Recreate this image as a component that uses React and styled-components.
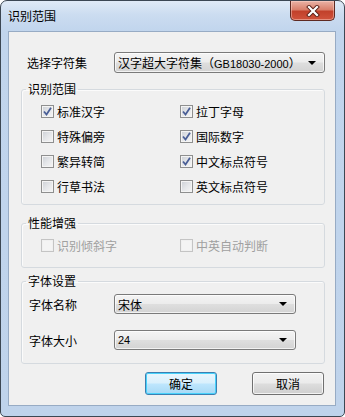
import styled, { createGlobalStyle } from "styled-components";

const GlobalStyle = createGlobalStyle`
  html, body {
    margin: 0;
    padding: 0;
    background: #ffffff;
  }
  body {
    font-family: "Noto Sans CJK SC", "Noto Sans", sans-serif;
    font-size: 12px;
    color: #000;
  }
`;

const Window = styled.div`
  /* Aero basic frame */
  width: 345px;
  height: 417px;
  box-sizing: border-box;
  border: 1px solid #3c4753;
  border-radius: 7px 7px 5px 5px;
  background: linear-gradient(180deg, #e0eaf6 0px, #cbdcf0 14px, #c1d5ed 30px, #bfd3eb 100%);
  padding: 0 8px 10px 7px;
  display: flex;
  flex-direction: column;
  overflow: hidden;
`;

const TitleBar = styled.div`
  height: 30px;
  display: flex;
  align-items: flex-start;
  justify-content: space-between;
  flex-shrink: 0;

  & > span {
    line-height: 30px;
    font-size: 12px;
    color: #000;
  }
`;

const CloseButton = styled.div`
  width: 45px;
  height: 20px;
  margin-right: 1px;
  box-sizing: border-box;
  border: 1px solid #5e2a22;
  border-top: none;
  border-radius: 0 0 5px 5px;
  background: linear-gradient(180deg, #eab3a6 0%, #d9806c 45%, #c2412b 55%, #d0533c 100%);
  box-shadow: inset 0 0 0 1px rgba(255, 220, 210, 0.45);
  display: flex;
  align-items: center;
  justify-content: center;
`;

const Client = styled.div`
  flex: 1;
  box-sizing: border-box;
  border: 1px solid #97abc4;
  background: #f0f0f0;
  padding: 20px 10px 0 12px;
  display: flex;
  flex-direction: column;
`;

const TopRow = styled.div`
  display: flex;
  align-items: center;
  padding-left: 6px;
  height: 21px;
`;

const Label = styled.span`
  width: ${(p) => p.$w}px;
  flex-shrink: 0;
  color: #000;
`;

const Combo = styled.div`
  width: ${(p) => p.$w}px;
  height: ${(p) => p.$h}px;
  box-sizing: border-box;
  border: 1px solid #7a7a7a;
  border-radius: 3px;
  background: linear-gradient(180deg, #f4f4f4 0%, #ececec 48%, #dedede 52%, #d3d3d3 100%);
  box-shadow: inset 0 0 0 1px rgba(255, 255, 255, 0.7);
  display: flex;
  align-items: center;
  justify-content: space-between;
  padding: 0 8px 0 3px;
  white-space: nowrap;

  &::after {
    content: "";
    border-left: 4px solid transparent;
    border-right: 4px solid transparent;
    border-top: 4px solid #000;
  }
`;

const Latin = styled.span`
  font-family: "Liberation Sans", sans-serif;
  font-size: 11px;
`;

const Group = styled.fieldset`
  margin: ${(p) => p.$top}px 0 0 0;
  padding: ${(p) => p.$pad};
  border: 1px solid #d5dadf;
  border-radius: 3px;
  box-shadow: inset 1px 1px 0 #fbfbfb;
  min-width: 0;
`;

const Legend = styled.legend`
  margin-left: 4px;
  padding: 0 2px;
  line-height: 16px;
  font-size: 12px;
  color: #000;
`;

const CheckGrid = styled.div`
  display: grid;
  grid-template-columns: 139px 1fr;
  grid-auto-rows: ${(p) => p.$row}px;
  align-items: center;
  padding-left: 19px;
`;

const CheckItem = styled.label`
  display: flex;
  align-items: center;
  gap: 3px;
  color: ${(p) => (p.$disabled ? "#a0a0a0" : "#000")};
`;

const Box = styled.span`
  width: 13px;
  height: 13px;
  box-sizing: border-box;
  border: 1px solid ${(p) => (p.$disabled ? "#c4c4c4" : "#8e8f8f")};
  background: ${(p) =>
    p.$disabled
      ? "#f4f4f4"
      : "linear-gradient(135deg, #cbcfd5 0%, #e4e6e9 50%, #f6f6f6 100%)"};
  box-shadow: inset 0 0 0 1px ${(p) => (p.$disabled ? "#f0f0f0" : "#f4f4f4")};
  display: flex;
  align-items: center;
  justify-content: center;
`;

const FontRow = styled.div`
  display: flex;
  align-items: center;
  padding-left: 7px;
  height: 20px;
  & + & {
    margin-top: 16px;
  }
`;

const ButtonRow = styled.div`
  display: flex;
  justify-content: flex-end;
  gap: 35px;
  margin-top: 8px;
  padding-right: 1px;
`;

const Button = styled.div`
  width: 72px;
  height: 23px;
  box-sizing: border-box;
  border-radius: 3px;
  display: flex;
  align-items: center;
  justify-content: center;
  color: #000;
  border: 1px solid ${(p) => (p.$primary ? "#3c7fb1" : "#707070")};
  background: ${(p) =>
    p.$primary
      ? "linear-gradient(180deg, #eaf6fd 0%, #d9f0fc 48%, #bee6fd 52%, #a7d9f5 100%)"
      : "linear-gradient(180deg, #f2f2f2 0%, #ebebeb 48%, #dddddd 52%, #cfcfcf 100%)"};
  box-shadow: inset 0 0 0 1px
    ${(p) => (p.$primary ? "#48d2fb" : "rgba(255,255,255,0.75)")};
`;

const Check = () => (
  <svg width="9" height="9" viewBox="0 0 9 9">
    <path d="M1 4.5 L3.5 7.5 L8 0.8" fill="none" stroke="#4a5f97" strokeWidth="1.8" />
  </svg>
);

const CheckBox = ({ checked, disabled, children }) => (
  <CheckItem $disabled={disabled}>
    <Box $disabled={disabled}>{checked && <Check />}</Box>
    {children}
  </CheckItem>
);

const scope = [
  ["标准汉字", true],
  ["拉丁字母", true],
  ["特殊偏旁", false],
  ["国际数字", true],
  ["繁异转简", false],
  ["中文标点符号", true],
  ["行草书法", false],
  ["英文标点符号", false],
];

export default function App() {
  return (
    <>
      <GlobalStyle />
      <Window>
        <TitleBar>
          <span>识别范围</span>
          <CloseButton>
            <svg width="14" height="12" viewBox="0 0 14 12">
              <path d="M3 2 L11 10 M11 2 L3 10" stroke="#5a1f16" strokeWidth="4" strokeLinecap="square" />
              <path d="M3 2 L11 10 M11 2 L3 10" stroke="#ffffff" strokeWidth="2.2" strokeLinecap="square" />
            </svg>
          </CloseButton>
        </TitleBar>
        <Client>
          <TopRow>
            <Label $w={87}>选择字符集</Label>
            <Combo $w={211} $h={21}>
              <span>
                汉字超大字符集（<Latin>GB18030-2000</Latin>）
              </span>
            </Combo>
          </TopRow>

          <Group $top={8} $pad="2px 0 5px 0">
            <Legend>识别范围</Legend>
            <CheckGrid $row={25}>
              {scope.map(([name, on]) => (
                <CheckBox key={name} checked={on}>
                  {name}
                </CheckBox>
              ))}
            </CheckGrid>
          </Group>

          <Group $top={10} $pad="2px 0 9px 0">
            <Legend>性能增强</Legend>
            <CheckGrid $row={25}>
              <CheckBox disabled>识别倾斜字</CheckBox>
              <CheckBox disabled>中英自动判断</CheckBox>
            </CheckGrid>
          </Group>

          <Group $top={5} $pad="5px 0 13px 0">
            <Legend>字体设置</Legend>
            <FontRow>
              <Label $w={85}>字体名称</Label>
              <Combo $w={182} $h={20}>
                <span>宋体</span>
              </Combo>
            </FontRow>
            <FontRow>
              <Label $w={85}>字体大小</Label>
              <Combo $w={182} $h={20}>
                <Latin>24</Latin>
              </Combo>
            </FontRow>
          </Group>

          <ButtonRow>
            <Button $primary>确定</Button>
            <Button>取消</Button>
          </ButtonRow>
        </Client>
      </Window>
    </>
  );
}
